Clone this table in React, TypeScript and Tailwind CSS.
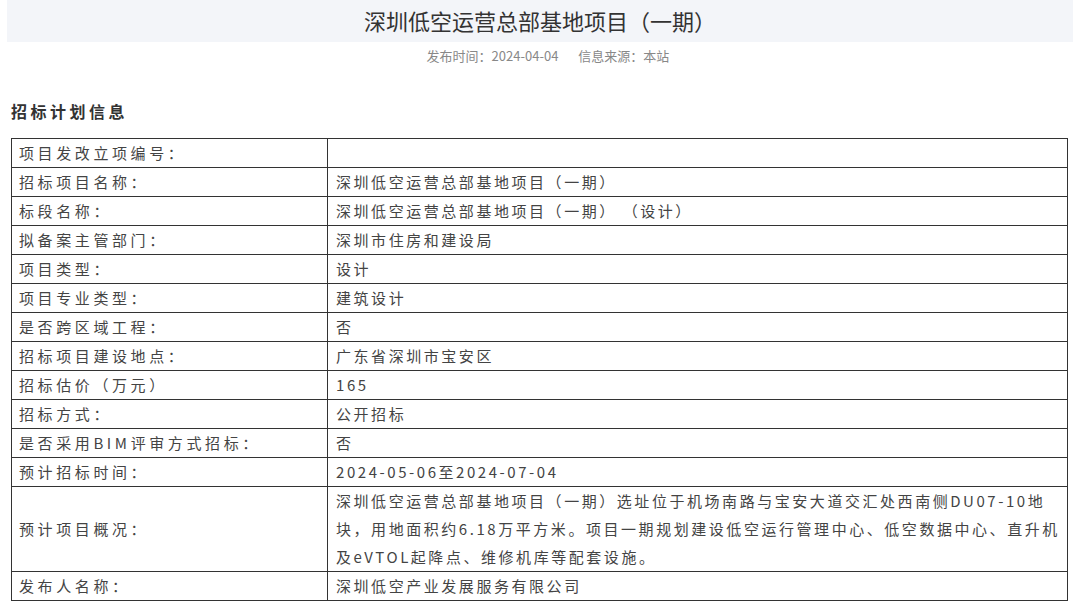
const rows: [string, string][] = [
  ["项目发改立项编号：", ""],
  ["招标项目名称：", "深圳低空运营总部基地项目（一期）"],
  ["标段名称：", "深圳低空运营总部基地项目（一期） （设计）"],
  ["拟备案主管部门：", "深圳市住房和建设局"],
  ["项目类型：", "设计"],
  ["项目专业类型：", "建筑设计"],
  ["是否跨区域工程：", "否"],
  ["招标项目建设地点：", "广东省深圳市宝安区"],
  ["招标估价（万元）", "165"],
  ["招标方式：", "公开招标"],
  ["是否采用BIM评审方式招标：", "否"],
  ["预计招标时间：", "2024-05-06至2024-07-04"],
];

const font = { fontFamily: '"Noto Sans CJK SC", "Noto Sans", sans-serif' };

function Row({ label, children }: { label: string; children: React.ReactNode }) {
  return (
    <tr>
      <td className="border border-[#333] w-[316px] pl-[7px] align-middle leading-[28px] tracking-[3.6px] text-[15px] text-[#444]">
        {label}
      </td>
      <td className="border border-[#333] pl-[8px] align-middle leading-[28px] tracking-[2.55px] text-[15px] text-[#444]">
        {children}
      </td>
    </tr>
  );
}

export default function App() {
  return (
    <div className="w-[1080px] h-[607px] bg-white overflow-hidden" style={font}>
      <div className="mx-[7px] h-[42px] bg-[#f3f5f9] flex items-center justify-center pb-[2px]">
        <h1 className="text-[22px] text-[#333] leading-none">深圳低空运营总部基地项目（一期）</h1>
      </div>
      <div className="flex justify-center gap-[20px] pl-[16px] mt-[5px] text-[13px] text-[#888] leading-[18px]">
        <span>发布时间：2024-04-04</span>
        <span>信息来源：本站</span>
      </div>
      <h2 className="ml-[11px] mt-[36px] text-[16px] font-bold tracking-[3.5px] text-[#333] leading-[20px]">
        招标计划信息
      </h2>
      <table className="ml-[11px] mt-[17px] w-[1057px] border-collapse border border-[#666]">
        <tbody>
          {rows.map(([l, r]) => (
            <Row key={l} label={l}>
              {r}
            </Row>
          ))}
          <Row label="预计项目概况：">
            <span className="block whitespace-nowrap">
              深圳低空运营总部基地项目（一期）选址位于机场南路与宝安大道交汇处西南侧DU07-10地
              <br />
              块，用地面积约6.18万平方米。项目一期规划建设低空运行管理中心、低空数据中心、直升机
              <br />
              及eVTOL起降点、维修机库等配套设施。
            </span>
          </Row>
          <Row label="发布人名称：">深圳低空产业发展服务有限公司</Row>
        </tbody>
      </table>
    </div>
  );
}
